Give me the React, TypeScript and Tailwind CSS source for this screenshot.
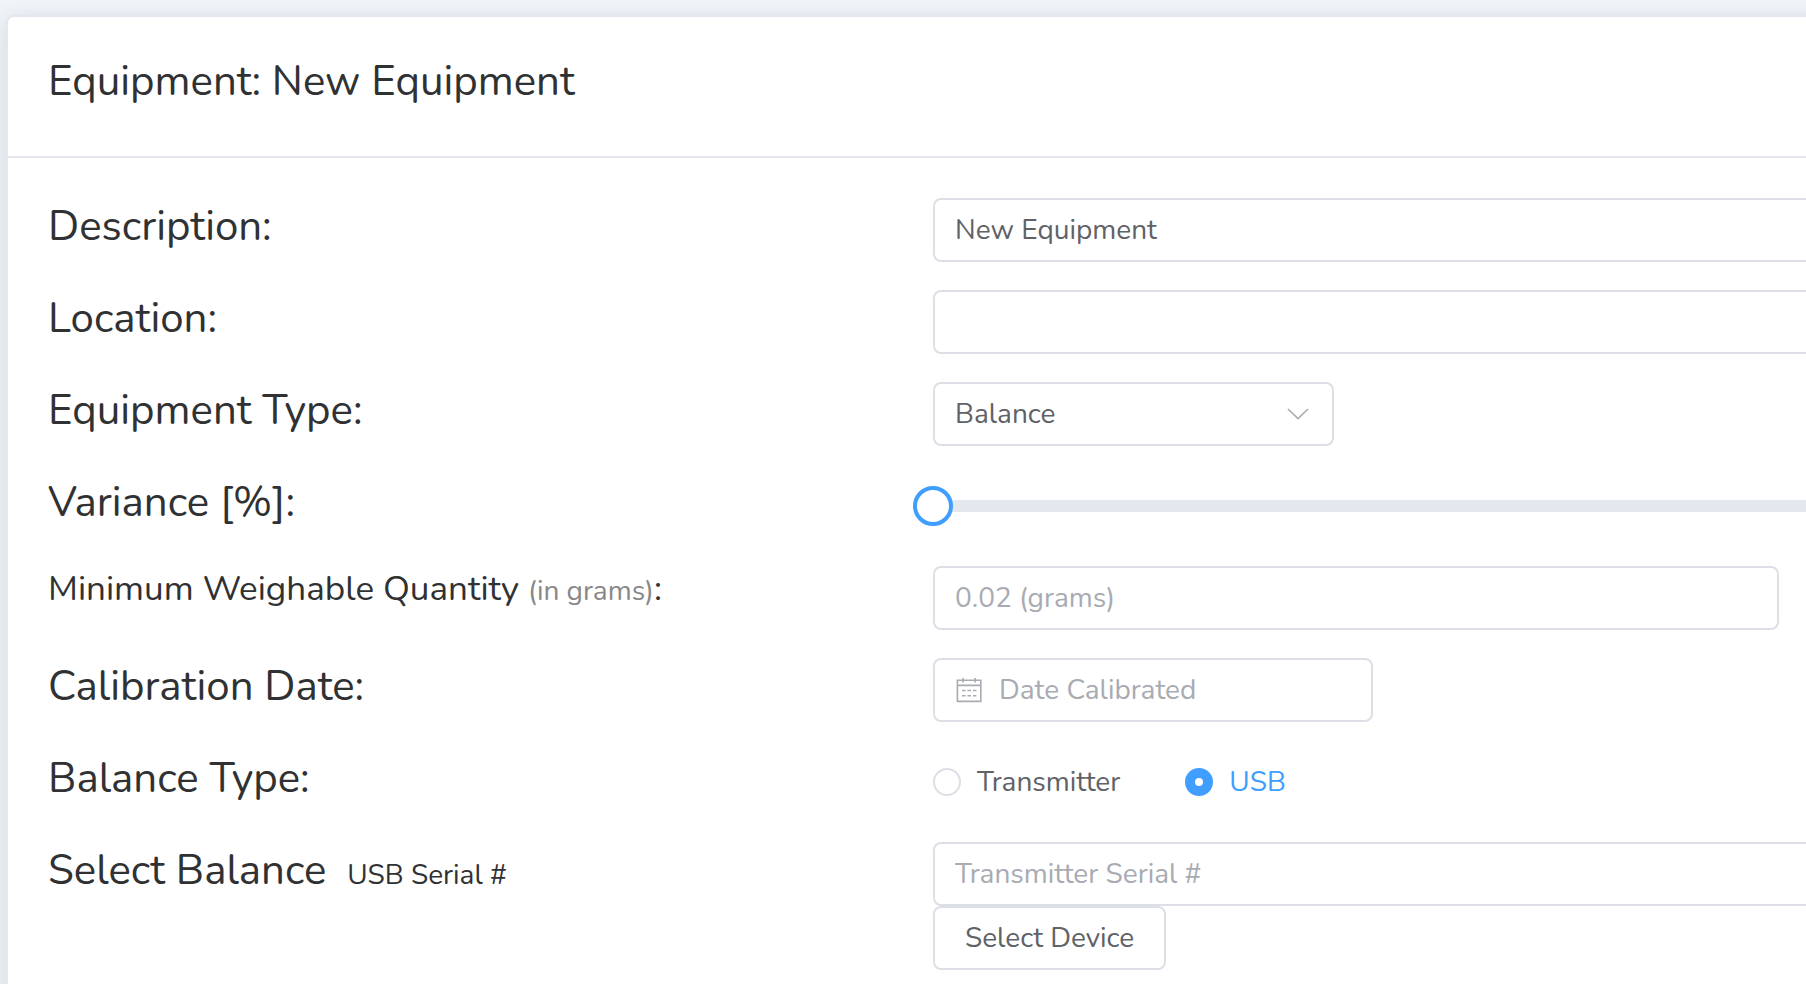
import { useState } from "react";
import type { ReactNode } from "react";

const field =
  "block h-16 rounded-lg border-2 border-[#dcdfe6] bg-white px-5 text-[28px] text-[#606266] outline-none placeholder:text-[#a8abb2] placeholder:opacity-100 focus:border-[#409eff]";

const labelText = "block text-[42px] leading-[58px] text-[#303133]";

function Row({ label, children }: { label: ReactNode; children: ReactNode }) {
  return (
    <div className="grid min-h-16 grid-cols-2">
      <div>{label}</div>
      <div>{children}</div>
    </div>
  );
}

function CalendarIcon() {
  return (
    <svg
      className="pointer-events-none absolute top-[19px] left-[23px] h-[26px] w-[26px]"
      viewBox="0 0 26 26"
      fill="none"
      stroke="#a8abb2"
      strokeWidth="1.6"
      aria-hidden="true"
    >
      <path d="M1.4 3.3h23.4V24.4H1.4zM1.4 8.4h23.4M7 1v4.4M19.2 1v4.4" />
      <path d="M6 13.5h3.6M11.4 13.5h3.6M17 13.5h3.4M6 18.8h3.6M11.4 18.8h3.6M17 18.8h3.4" />
    </svg>
  );
}

function Radio({
  value,
  checked,
  onSelect,
}: {
  value: string;
  checked: boolean;
  onSelect: (value: string) => void;
}) {
  return (
    <label
      className={
        checked
          ? "flex items-center gap-4 text-[28px] leading-8 text-[#409eff]"
          : "flex items-center gap-4 text-[28px] leading-8 text-[#606266]"
      }
    >
      <input
        type="radio"
        name="balance-type"
        value={value}
        checked={checked}
        onChange={() => onSelect(value)}
        className="h-7 w-7 appearance-none rounded-full border-2 border-[#dcdfe6] bg-white checked:border-10 checked:border-[#409eff]"
      />
      <span>{value}</span>
    </label>
  );
}

export default function App() {
  const [description, setDescription] = useState("New Equipment");
  const [variance, setVariance] = useState(0);
  const [balanceType, setBalanceType] = useState("USB");

  return (
    <div className="flex h-screen overflow-hidden bg-[#f0f5f9] pt-[15px] pl-1.5 font-['Nunito','Lato',sans-serif]">
      <main className="-mr-[54px] -mb-10 grow rounded-lg border-2 border-[#e4e7ed] bg-white shadow-[0_4px_24px_rgba(0,0,0,0.12)]">
        <header className="border-b-2 border-[#e4e7ed] px-10 pt-9 pb-[45px]">
          <h1 className="text-[42px] leading-[58px] text-[#303133]">Equipment: New Equipment</h1>
        </header>

        <form className="flex flex-col gap-7 px-10 pt-10" onSubmit={(e) => e.preventDefault()}>
          <Row label={<label htmlFor="description" className={labelText}>Description:</label>}>
            <input
              id="description"
              type="text"
              value={description}
              onChange={(e) => setDescription(e.target.value)}
              className={`${field} w-full`}
            />
          </Row>

          <Row label={<label htmlFor="location" className={labelText}>Location:</label>}>
            <input id="location" type="text" className={`${field} w-full`} />
          </Row>

          <Row label={<label htmlFor="equipment-type" className={labelText}>Equipment Type:</label>}>
            <div className="relative w-[401px]">
              <select id="equipment-type" className={`${field} w-full appearance-none`}>
                <option>Balance</option>
              </select>
              <svg
                className="pointer-events-none absolute top-[26px] right-[25px] h-3 w-[22px]"
                viewBox="0 0 22 12"
                fill="none"
                stroke="#a8abb2"
                strokeWidth="1.6"
                aria-hidden="true"
              >
                <path d="M1 1l10 9.6L21 1" />
              </svg>
            </div>
          </Row>

          <Row label={<label htmlFor="variance" className={labelText}>Variance [%]:</label>}>
            <div className="-ml-5 flex h-16 items-center">
              <input
                id="variance"
                type="range"
                min={0}
                max={100}
                value={variance}
                onChange={(e) => setVariance(Number(e.target.value))}
                className="h-10 w-full appearance-none bg-transparent [&::-webkit-slider-runnable-track]:h-3 [&::-webkit-slider-runnable-track]:rounded-md [&::-webkit-slider-runnable-track]:bg-[#e4e7ed] [&::-webkit-slider-thumb]:-mt-3.5 [&::-webkit-slider-thumb]:h-10 [&::-webkit-slider-thumb]:w-10 [&::-webkit-slider-thumb]:appearance-none [&::-webkit-slider-thumb]:rounded-full [&::-webkit-slider-thumb]:border-4 [&::-webkit-slider-thumb]:border-[#409eff] [&::-webkit-slider-thumb]:bg-white"
              />
            </div>
          </Row>

          <Row
            label={
              <label htmlFor="minimum" className="block text-[35px] leading-[46px] text-[#303133]">
                Minimum Weighable Quantity <span className="text-[28px] text-[#888888]">(in grams)</span>:
              </label>
            }
          >
            <input id="minimum" type="text" placeholder="0.02 (grams)" className={`${field} w-[846px]`} />
          </Row>

          <Row label={<label htmlFor="calibration" className={labelText}>Calibration Date:</label>}>
            <div className="relative w-[440px]">
              <CalendarIcon />
              <input
                id="calibration"
                type="text"
                placeholder="Date Calibrated"
                className={`${field} w-full pl-16`}
              />
            </div>
          </Row>

          <Row label={<span id="balance-type" className={labelText}>Balance Type:</span>}>
            <div role="radiogroup" aria-labelledby="balance-type" className="flex h-16 items-center gap-[65px]">
              <Radio value="Transmitter" checked={balanceType === "Transmitter"} onSelect={setBalanceType} />
              <Radio value="USB" checked={balanceType === "USB"} onSelect={setBalanceType} />
            </div>
          </Row>

          <Row
            label={
              <label htmlFor="serial" className={labelText}>
                Select Balance <span className="ml-2.5 text-[28px]">USB Serial #</span>
              </label>
            }
          >
            <input id="serial" type="text" placeholder="Transmitter Serial #" className={`${field} w-full`} />
            <button
              type="button"
              className="block h-16 rounded-lg border-2 border-[#dcdfe6] bg-white px-[30px] text-[28px] text-[#606266]"
            >
              Select Device
            </button>
          </Row>
        </form>
      </main>
    </div>
  );
}
